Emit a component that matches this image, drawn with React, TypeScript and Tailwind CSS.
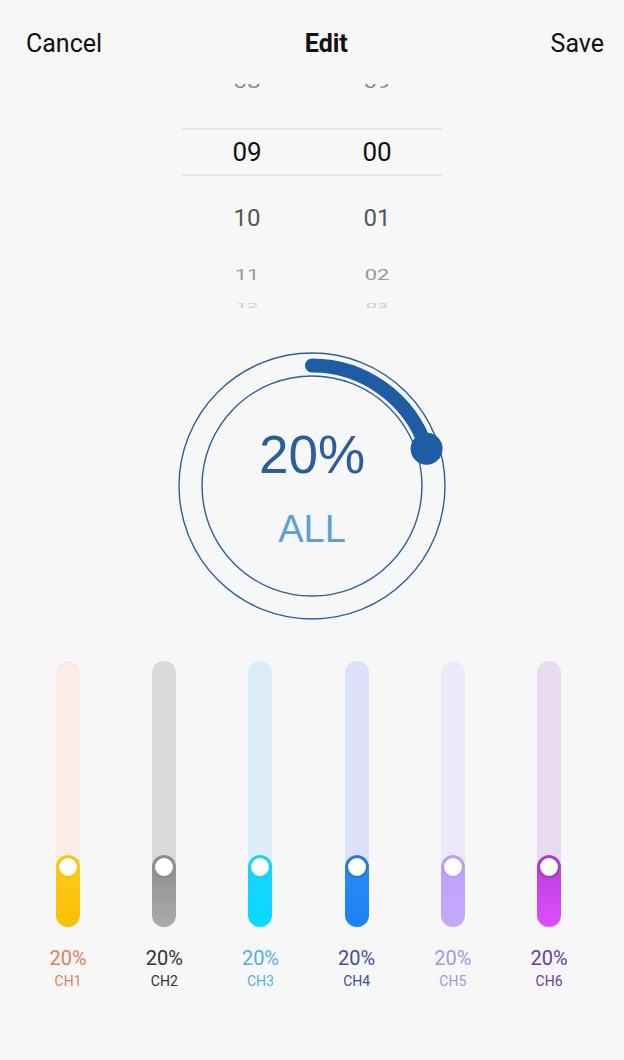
import { Fragment } from 'react'

const channels = [
  { name: 'CH1', track: 'bg-[#f9ece6]', fill: 'bg-gradient-to-b from-[#ffcd1a] to-[#f9bf00]', ring: 'border-[#fbc000]', text: 'text-[#e47d5c]' },
  { name: 'CH2', track: 'bg-[#d9d9d9]', fill: 'bg-gradient-to-b from-[#8c8c8c] to-[#ababab]', ring: 'border-[#8c8c8c]', text: 'text-[#333333]' },
  { name: 'CH3', track: 'bg-[#ddedf8]', fill: 'bg-gradient-to-b from-[#18d2fb] to-[#05dcff]', ring: 'border-[#18d2fb]', text: 'text-[#4cb3e2]' },
  { name: 'CH4', track: 'bg-[#dde1f8]', fill: 'bg-gradient-to-b from-[#2a8cf7] to-[#1b82f2]', ring: 'border-[#2a76c9]', text: 'text-[#3f4d9f]' },
  { name: 'CH5', track: 'bg-[#ebe8f8]', fill: 'bg-gradient-to-b from-[#bca0fa] to-[#c5aafc]', ring: 'border-[#b89ef0]', text: 'text-[#a894df]' },
  { name: 'CH6', track: 'bg-[#e7dcef]', fill: 'bg-gradient-to-b from-[#b63ed8] to-[#e04cff]', ring: 'border-[#a43cc8]', text: 'text-[#6c3b99]' },
]

const R = 120.5
const arcEnd = { x: 135 + R * Math.sin((72 * Math.PI) / 180), y: 135 - R * Math.cos((72 * Math.PI) / 180) }

function Dial() {
  return (
    <div className="relative w-[270px] h-[270px] mx-auto">
      <svg className="absolute inset-0" width="270" height="270" viewBox="0 0 270 270">
        <circle cx="135" cy="135" r="133" fill="none" stroke="#2f5f96" strokeWidth="1.4" />
        <circle cx="135" cy="135" r="110" fill="none" stroke="#2f5f96" strokeWidth="1.4" />
        <path
          d={`M 135 ${135 - R} A ${R} ${R} 0 0 1 ${arcEnd.x} ${arcEnd.y}`}
          fill="none"
          stroke="#1f5ca6"
          strokeWidth="14"
          strokeLinecap="round"
        />
        <circle cx={arcEnd.x} cy={arcEnd.y} r="16" fill="#1f5ca6" />
      </svg>
      <div className="relative h-full flex flex-col items-center font-['Liberation_Sans',Arial,sans-serif]">
        <div className="mt-[77px] h-[54px] leading-[54px] text-[53px] text-[#2a5d9f]">20%</div>
        <div className="mt-[25px] h-[44px] leading-[44px] text-[38px] text-[#5ba0d6]">ALL</div>
      </div>
    </div>
  )
}

function Picker() {
  return (
    <div className="h-[226px] overflow-hidden">
      <div className="-mt-[24px] w-[260px] mx-auto text-center">
        <div className="h-[44px] grid grid-cols-2 items-center text-[24px] text-[#888] scale-y-[0.8]">
          <span>08</span>
          <span>09</span>
        </div>
        <div className="h-[24px]" />
        <div className="h-[48px] grid grid-cols-2 items-center border-y-2 border-[#e6e6e6] text-[26px] text-[#111]">
          <span>09</span>
          <span>00</span>
        </div>
        <div className="h-[84px] grid grid-cols-2 items-center text-[24px] text-[#555]">
          <span>10</span>
          <span>01</span>
        </div>
        <div className="h-[24px] grid grid-cols-2 items-center text-[22px] text-[#999] scale-y-[0.7]">
          <span>11</span>
          <span>02</span>
        </div>
        <div className="h-[44px] grid grid-cols-2 items-center text-[20px] text-[#ccc] scale-y-[0.35]">
          <span>12</span>
          <span>03</span>
        </div>
      </div>
    </div>
  )
}

export default function App() {
  return (
    <div className="w-[624px] h-[1060px] bg-[#f7f7f7] font-['Roboto',sans-serif] overflow-hidden">
      {/* Header */}
      <div className="h-[84px] flex items-center justify-between pl-[26px] pr-[20px] pt-[4px] text-[25px] text-[#111]">
        <span>Cancel</span>
        <span className="font-bold">Edit</span>
        <span>Save</span>
      </div>

      <Picker />

      <div className="mt-[41px]">
        <Dial />
      </div>

      {/* Channel sliders */}
      <div className="mt-[40px] pl-[20px] grid grid-cols-[repeat(6,96.2px)]">
        {channels.map((ch) => (
          <Fragment key={ch.name}>
            <div className="flex flex-col items-center">
              <div className={`w-[24px] h-[266px] rounded-full ${ch.track} flex flex-col justify-end`}>
                <div className={`h-[72px] rounded-full ${ch.fill} flex justify-center pt-[1px]`}>
                  <div className={`w-[22px] h-[22px] rounded-full bg-white border-2 ${ch.ring}`} />
                </div>
              </div>
              <div className={`mt-[19px] text-[20px] leading-[24px] ${ch.text}`}>20%</div>
              <div className={`text-[14px] leading-[18px] mt-[2px] ${ch.text}`}>{ch.name}</div>
            </div>
          </Fragment>
        ))}
      </div>
    </div>
  )
}
